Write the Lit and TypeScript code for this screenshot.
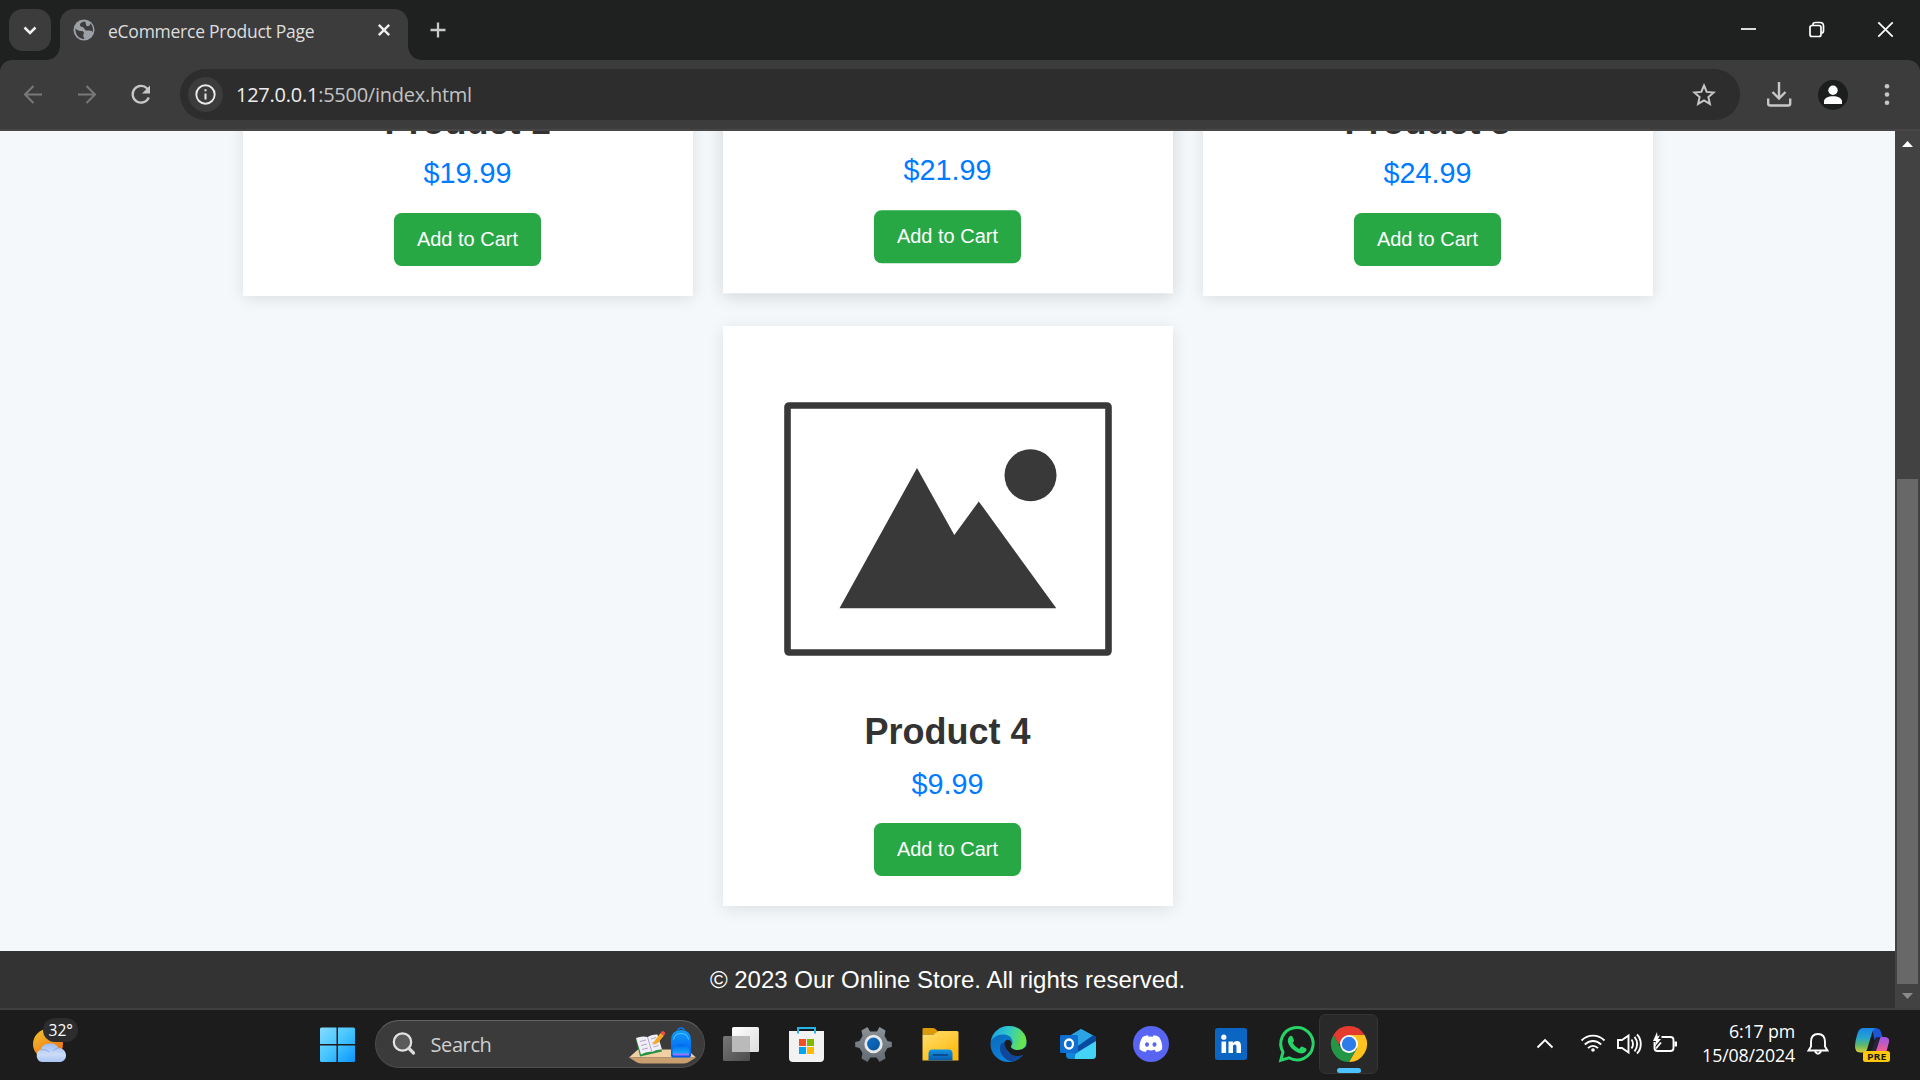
import { LitElement, html, svg, css } from "lit";
import { customElement, property } from "lit/decorators.js";

// Icon cell: its viewBox is the slice of the screen that it covers.
const cell = (x: number, y: number, w: number, h: number, body: unknown) => html`
  <svg class="cell" width=${w} height=${h} viewBox="${x} ${y} ${w} ${h}" fill="none">${body}</svg>`;

@customElement("browser-chrome")
class BrowserChrome extends LitElement {
  static styles = css`
    :host { display: block; font-family: "Open Sans", "Noto Sans", sans-serif; }
    svg { display: block; flex: none; }
    .tabs { display: flex; height: 60px; background: #1f2120; }
    .tab { display: flex; width: 348px; height: 51px; margin-top: 9px; background: #3c3c3c; border-radius: 14px 14px 0 0; }
    .title { width: 262px; font-size: 17.5px; line-height: 45px; letter-spacing: -0.25px; color: #dedede; white-space: nowrap; }
    .spacer { flex: 1; }
    .toolbar { display: flex; flex: 1; height: 69px; border-bottom: 2px solid #484646; }
    .corner { background: #1f2120; }
    .pill { display: flex; width: 1560px; height: 51px; margin-top: 9px; border-radius: 26px; background: #2d2d2d; }
    .url { flex: 1; font-size: 20px; line-height: 52px; letter-spacing: -0.25px; color: #c2c2c2; white-space: nowrap; }
    .host { color: #ececec; }
    .bar { display: flex; border-radius: 12px 12px 0 0; background: #3c3c3c; }
  `;
  render() {
    return html`
      <div class="tabs">
        ${cell(0, 0, 60, 60, svg`
          <rect x="9" y="9" width="42" height="42" rx="14" fill="#3c3c3c"/>
          <path d="M60 45v15H45c9 0 15-6 15-15z" fill="#3c3c3c"/>
          <path d="M24.5 27.5l5.500 5.500 5.500-5.500" stroke="#f0f0f0" stroke-width="2.500"/>`)}
        <div class="tab">
          ${cell(60, 9, 48, 51, svg`
            <circle cx="84" cy="30" r="10.500" fill="#9aa0a6"/>
            <path d="M84.500 21.500c-3 .5-5 2-4.500 4 .6 2 4 1 4.500 3.500.4 2 3.500 1.500 5 1.500 2 0 3.500 1 3 2.500 1-3 .5-7-2-9.500-.5 2-2 3-3.500 2.500-2-.8 0-3-2.500-4.500z" fill="#3c3c3c"/>
            <path d="M75.500 28.500c2 2 4 2.500 6 2.500s3 1.500 2 3.500 1 3 1 4.500c-5 0-9.500-4-9-10.500z" fill="#3c3c3c"/>`)}
          <span class="title">eCommerce Product Page</span>
          ${cell(370, 9, 38, 51, svg`<path d="M378.800 24.800l10.400 10.400M389.200 24.800l-10.400 10.400" stroke="#eee" stroke-width="2.400"/>`)}
        </div>
        ${cell(408, 0, 60, 60, svg`
          <path d="M408 45v15h15c-9 0-15-6-15-15z" fill="#3c3c3c"/>
          <path d="M438 22.500v15M430.500 30h15" stroke="#c9c9c9" stroke-width="2.300"/>`)}
        <span class="spacer"></span>
        ${cell(1720, 0, 200, 60, svg`<g stroke="#fff" stroke-width="1.700">
          <path d="M1741 29h15"/>
          <rect x="1810" y="25.500" width="11" height="11" rx="2"/>
          <path d="M1813 25v-.5q0-2 2.500-2h4.500q3.500 0 3.500 3.500v4.500q0 2.500-2 2.500"/>
          <path d="M1878.300 22.300l14.400 14.400M1892.700 22.300l-14.400 14.400"/></g>`)}
      </div>
      <div class="corner"><div class="bar"><div class="toolbar">
        ${cell(0, 60, 60, 69, svg`<path d="M42 94.500H25.500M33.500 86l-8.500 8.500 8.500 8.500" stroke="#797979" stroke-width="2"/>`)}
        ${cell(60, 60, 54, 69, svg`<path d="M78 94.500h16.500M86.500 86l8.500 8.500-8.500 8.500" stroke="#797979" stroke-width="2"/>`)}
        ${cell(114, 60, 66, 69, svg`
          <path d="M148.800 97.500a8.400 8.400 0 1 1-1.600-9l1.600 2" stroke="#c7c7c7" stroke-width="2.300"/>
          <path d="M150 85.500v8h-8z" fill="#c7c7c7"/>`)}
        <div class="pill">
          ${cell(180, 69, 56, 51, svg`
            <circle cx="205.500" cy="94.500" r="17.500" fill="#3c3c3c"/>
            <circle cx="205.500" cy="94.500" r="9.200" stroke="#eaeaea" stroke-width="1.900"/>
            <path d="M205.500 93.500v6M205.500 89.300v2" stroke="#eaeaea" stroke-width="2"/>`)}
          <span class="url"><span class="host">127.0.0.1</span>:5500/index.html</span>
          ${cell(1680, 69, 60, 51, svg`<path d="M1704 85.500l2.700 6.400 6.900.6-5.200 4.600 1.500 6.800-5.900-3.500-5.900 3.500 1.500-6.800-5.200-4.600 6.900-.6z" stroke="#c7c7c7" stroke-width="2"/>`)}
        </div>
        ${cell(1740, 60, 180, 69, svg`
          <path d="M1779 82v16M1772.500 92l6.500 6.500 6.500-6.500M1768.200 98.500v5q0 2 2 2h18q2 0 2-2v-5" stroke="#c7c7c7" stroke-width="2.400"/>
          <circle cx="1833" cy="95" r="15" fill="#1b1e1d"/>
          <circle cx="1833" cy="90.300" r="4.700" fill="#fff"/>
          <path d="M1824 104v-2.500c0-3.500 4.500-5.300 9-5.300s9 1.800 9 5.300v2.500z" fill="#fff"/>
          <g fill="#c7c7c7"><circle cx="1887" cy="86.200" r="2.300"/><circle cx="1887" cy="94.500" r="2.300"/><circle cx="1887" cy="102.800" r="2.300"/></g>`)}
      </div></div></div>`;
  }
}

@customElement("product-card")
class ProductCard extends LitElement {
  @property() name = "";
  @property() price = "";
  static styles = css`
    :host { display: flex; flex-direction: column; align-items: center; box-sizing: border-box; width: 450px; height: 580px; padding: 30px; background: #fff; box-shadow: 0 3px 15px rgba(0, 0, 0, 0.1); font-family: "Liberation Sans", Arial, sans-serif; }
    :host([lifted]) { transform: translateY(-2.700px); box-shadow: 0 4px 17px rgba(0, 0, 0, 0.14); }
    svg { display: block; flex: none; }
    h2 { margin: 10px 0 0; font-size: 36px; line-height: 41px; font-weight: 700; color: #333; }
    p { margin: 15px 0 0; font-size: 28.800px; line-height: 33px; color: #007bff; }
    button { margin: 23px 0 0; width: 147px; height: 53px; padding: 0; border: 0; border-radius: 7.500px; background: #28a745; color: #fff; font: 20px "Liberation Sans", Arial, sans-serif; }
    :host(:last-child) p { margin: 16px 0 -1px; }
  `;
  render() {
    return html`
      <svg width="390" height="345" viewBox="753 356 390 345">
        <rect x="787.500" y="405.500" width="321" height="247" rx="1.500" fill="#fff" stroke="#393939" stroke-width="6.600"/>
        <circle cx="1030.500" cy="475.300" r="26" fill="#393939"/>
        <path d="M839.500 608.300L917 468l37.300 67 24.500-33.600L1056.300 608.300z" fill="#393939"/>
      </svg>
      <h2>${this.name}</h2>
      <p>${this.price}</p>
      <button>Add to Cart</button>`;
  }
}

@customElement("store-page")
class StorePage extends LitElement {
  static styles = css`
    :host { display: flex; height: 877px; overflow: hidden; font-family: "Liberation Sans", Arial, sans-serif; }
    .page { display: flex; flex-direction: column; justify-content: flex-end; width: 1895px; height: 877px; overflow: hidden; background: #f4f8fb; }
    .grid { display: flex; flex-wrap: wrap; justify-content: center; gap: 30px; flex: none; padding: 0 200px 45px; }
    footer { flex: none; height: 57px; line-height: 57px; background: #333; color: #fff; font-size: 24px; text-align: center; }
    .scroll { display: flex; flex-direction: column; align-items: center; width: 25px; background: #424242; }
    .thumb { width: 21px; height: 505px; background: #686868; }
    .gap { flex: none; height: 323px; }
    svg { display: block; flex: none; }
  `;
  render() {
    return html`
      <div class="page">
        <div class="grid">
          <product-card name="Product 1" price="$19.99"></product-card>
          <product-card lifted name="Product 2" price="$21.99"></product-card>
          <product-card name="Product 3" price="$24.99"></product-card>
          <product-card name="Product 4" price="$9.99"></product-card>
        </div>
        <footer>© 2023 Our Online Store. All rights reserved.</footer>
      </div>
      <div class="scroll">
        ${cell(1895, 131, 25, 25, svg`<path d="M1902 147l5.500-6 5.500 6z" fill="#fff"/>`)}
        <div class="gap"></div>
        <div class="thumb"></div>
        ${cell(1895, 984, 25, 24, svg`<path d="M1902 993l5.500 6 5.500-6z" fill="#8a8a8a"/>`)}
      </div>`;
  }
}

@customElement("task-bar")
class TaskBar extends LitElement {
  static styles = css`
    :host { display: flex; box-sizing: border-box; height: 72px; border-top: 2px solid #404040; background: #1c1c1c; color: #fff; font-family: "Open Sans", "Noto Sans", sans-serif; }
    svg { display: block; flex: none; }
    text { font-family: "Open Sans", "Noto Sans", sans-serif; }
    .search { display: flex; box-sizing: border-box; width: 330px; height: 48px; margin: 10px 5px 0 9px; border: 1.500px solid #4c4c4c; border-top-color: #626262; border-radius: 24px; background: #3b3b3b; overflow: hidden; }
    .label { flex: 1; font-size: 20px; line-height: 47px; letter-spacing: -0.4px; color: #cfcfcf; }
    .spacer { flex: 1; }
    .clock { width: 115px; padding-top: 9px; text-align: right; font-size: 17.800px; line-height: 24px; letter-spacing: -0.15px; white-space: nowrap; }
  `;
  render() {
    return html`
      <svg width="310" height="70" viewBox="0 1010 310 70">
        <defs>
          <linearGradient id="sun" x2=".7" y2="1"><stop stop-color="#efc52f"/><stop offset="1" stop-color="#ef6c13"/></linearGradient>
          <linearGradient id="cloud" x2="0" y2="1"><stop stop-color="#9dbdf0"/><stop offset=".6" stop-color="#cbdcf8"/><stop offset="1" stop-color="#a9c3f2"/></linearGradient>
        </defs>
        <circle cx="48" cy="1044" r="15" fill="url(#sun)"/>
        <path d="M42 1062a6.500 6.500 0 0 1-1-12.500c1-4 4-6 9.500-6 4.500 0 6.500 2 8 4.500 5 .5 7.500 3.500 7.500 7.500s-3 6.500-6.500 6.500z" fill="url(#cloud)"/>
        <path d="M41 1050c4-1 6 0 8 2M53 1051c2-2.500 4-3 6-2.800" stroke="#88aae8" fill="none"/>
        <rect x="43" y="1018" width="35" height="24" rx="12" fill="#2d2d2d"/>
        <text x="48.500" y="1036" font-size="16.500" fill="#fff" textLength="24.500" lengthAdjust="spacingAndGlyphs">32°</text>
      </svg>
      <svg width="56" height="70" viewBox="310 1010 56 70">
        <defs><linearGradient id="win" gradientUnits="userSpaceOnUse" x1="320" y1="1027" x2="355" y2="1062"><stop stop-color="#85dcff"/><stop offset=".5" stop-color="#45c5ff"/><stop offset="1" stop-color="#0a95ff"/></linearGradient></defs>
        <path d="M321.500 1027.500H336.500V1044H320V1029q0-1.500 1.500-1.500zM338 1027.500h15.500q1.500 0 1.500 1.500V1044H338zM320 1045.500h16.500V1062H321.500q-1.500 0-1.500-1.500zM338 1045.500h17v15q0 1.500-1.500 1.500H338z" fill="url(#win)"/>
      </svg>
      <div class="search">
        <svg width="54.500" height="45" viewBox="376 1021.500 54.500 45">
          <circle cx="402.500" cy="1042.500" r="8.700" fill="#5a5a5a" stroke="#e3e3e3" stroke-width="2.200"/>
          <path d="M409 1049l4.500 4.500" stroke="#dadada" stroke-width="3.200" stroke-linecap="round"/>
        </svg>
        <span class="label">Search</span>
        <svg width="80" height="45" viewBox="624 1021.500 80 45">
          <defs>
            <linearGradient id="bag" x2="0" y2="1"><stop stop-color="#109dff"/><stop offset="1" stop-color="#0059e8"/></linearGradient>
            <linearGradient id="pocket" x2="0" y2="1"><stop stop-color="#0065ee"/><stop offset="1" stop-color="#18b0fa"/></linearGradient>
          </defs>
          <path d="M629 1058l9-8h49l9 8z" fill="#f3cfa5"/>
          <path d="M629 1058h67l-8 5q-2 1-5 1h-41q-3 0-5-1z" fill="#c99f70"/>
          <path d="M636 1040l4 17 22-5-1-5z" fill="#279242"/>
          <path d="M636 1038.500q6-2.500 11.500-1 4-3 10-2.500l4.500 15q-6-.5-10 2.500-5-1-11 2.500z" fill="#f1eef8"/>
          <path d="M647.500 1037.500l4.500 15M640 1042l6-1.500M641 1046l6-1.500M642 1050l6-1.500M651 1039.500l5-1.500M652 1043.500l6-1.500M653.500 1047.500l5-1.500" stroke="#aaa6c5" stroke-width="1" fill="none"/>
          <path d="M654.500 1041.500l6-8 3.500 2.500-6 7.500-5 2z" fill="#f8a723"/><path d="M660.500 1033.500l2-2q3 .5 2.500 3l-1.500 2z" fill="#f34f4c"/>
          <path d="M678 1031q0-2.500 3-2.500t3 2.500" fill="none" stroke="#0875e9" stroke-width="1.500"/>
          <path d="M671 1056v-15q0-10.500 10-10.500t10 10.500v15q0 2-2 2h-16q-2 0-2-2z" fill="url(#bag)"/>
          <path d="M673.500 1040q1-6 7.500-6t7.500 6" stroke="#55c5ff" fill="none"/>
          <path d="M672.500 1053q0-8.500 8.500-8.500t8.500 8.500v2h-17z" fill="url(#pocket)"/>
          <path d="M673 1055h16" stroke="#9a72ff" stroke-width="2"/>
        </svg>
      </div>
      <svg width="61" height="70" viewBox="710 1010 61 70">
        <defs><linearGradient id="tv" x2="1" y2="1"><stop stop-color="#fff"/><stop offset="1" stop-color="#dcdcdc"/></linearGradient><linearGradient id="tv2" x2="1" y2="1"><stop stop-color="#777"/><stop offset="1" stop-color="#4c4c4c"/></linearGradient></defs>
        <rect x="723" y="1036" width="27" height="25" rx="1.500" fill="url(#tv2)"/>
        <rect x="732" y="1027" width="27" height="25" rx="1.500" fill="url(#tv)"/>
        <path d="M732 1036h18v16h-18z" fill="#bababa"/>
      </svg>
      <svg width="69" height="70" viewBox="771 1010 69 70">
        <path d="M789 1031h35v27q0 4-4 4h-27q-4 0-4-4z" fill="#f2f2f2"/>
        <path d="M798 1033.500v-5.500h17v5.500" fill="none" stroke="#25b5e7" stroke-width="2"/>
        <path d="M799 1039h7v7h-7z" fill="#f25022"/><path d="M807 1039h7v7h-7z" fill="#7fba00"/><path d="M799 1047h7v7h-7z" fill="#00a4ef"/><path d="M807 1047h7v7h-7z" fill="#ffb900"/>
      </svg>
      <svg width="67" height="70" viewBox="840 1010 67 70">
        <defs><linearGradient id="gear" x2="0" y2="1"><stop stop-color="#8b9298"/><stop offset="1" stop-color="#626b73"/></linearGradient><linearGradient id="gearc" x2="1" y2="1"><stop stop-color="#1073cf"/><stop offset="1" stop-color="#075095"/></linearGradient></defs>
        <path d="M867.500 1027l2.500 4.500h7l2.500-4.500 6 3.500-1 5.500 3 5 4.300 1v5l-4.300 1-3 5 1 5.500-6 3.500-3-4.500h-6l-3 4.500-6-3.500 1-5.500-3-5-4.300-1v-5l4.300-1 3-5-1-5.500z" fill="url(#gear)"/>
        <circle cx="873.500" cy="1044" r="7.800" fill="url(#gearc)" stroke="#e6e8ea" stroke-width="2.800"/>
      </svg>
      <svg width="68" height="70" viewBox="907 1010 68 70">
        <defs><linearGradient id="fold" x2=".7" y2="1"><stop stop-color="#ffdf70"/><stop offset="1" stop-color="#ffb90d"/></linearGradient><linearGradient id="foldb" x2="0" y2="1"><stop stop-color="#1495e4"/><stop offset="1" stop-color="#075bb0"/></linearGradient></defs>
        <path d="M922.500 1029q0-1 1.500-1h9q2 0 3 1.500l2 2v3h-15.500z" fill="#dc9a04"/>
        <path d="M922.500 1034.500h11l5-3.500H957q1.500 0 1.500 1.500V1060.500h-36z" fill="url(#fold)"/>
        <path d="M928.500 1060.500v-7q0-4 4-4h16q4 0 4 4v7z" fill="url(#foldb)"/>
        <path d="M933 1055h15" stroke="#064486" stroke-width="1.700"/>
      </svg>
      <svg width="68" height="70" viewBox="975 1010 68 70">
        <defs>
          <linearGradient id="e1" x2="1" y2=".2"><stop stop-color="#199ee3"/><stop offset=".5" stop-color="#2fc7cb"/><stop offset="1" stop-color="#69e54c"/></linearGradient>
          <linearGradient id="e2" x2=".5" y2="1"><stop stop-color="#0b62b3"/><stop offset="1" stop-color="#0b86dd"/></linearGradient>
        </defs>
        <circle cx="1008.500" cy="1044" r="18" fill="url(#e2)"/>
        <path d="M991 1041c1.500-9 9-15 18-15 10 0 17.500 7 17.500 15.500 0 6-4.500 8.500-9 8.500-3.500 0-6.500-1-6.500-3 0-1.500 2-2 1.500-5.500-1-5.500-5.500-7-9.500-7-6 0-10 3-12 6.500z" fill="url(#e1)"/>
        <path d="M1001 1044c-3 6 1 15 10 17.500 6-1 11-4 12.500-8-4.500 3-12 2.500-15-1-3-3.500-2.500-7-.5-10-3-.5-5.500 0-7 1.500z" fill="#10479a"/>
        <path d="M1004.500 1043.500c-.5-2.500 3-5 5.500-3 2.500 2 1.500 4 1 5.500s2 4 6.500 4c4 0 7-1.500 9.500-4.500v6l-3.500 3c-4 2-10 2.500-14-1.500-3-3-4.500-6-5-9.500z" fill="#1c1c1c"/>
      </svg>
      <svg width="73" height="70" viewBox="1043 1010 73 70">
        <path d="M1066 1038l15-9 15 8v18q0 4-4 4h-22q-4 0-4-4z" fill="#1583d6"/>
        <path d="M1066 1038l15-9 12 6.500-16 11z" fill="#2ba4e6"/>
        <path d="M1075 1048l18-12.500 3 1.500v5l-18 12z" fill="#054a9f"/>
        <path d="M1096 1041v14q0 4-4 4h-17q-1-5 3-7z" fill="#43d3f7"/>
        <rect x="1060" y="1035" width="18" height="18" rx="1.500" fill="#0f6fd0"/>
        <ellipse cx="1069" cy="1044" rx="4" ry="4.500" fill="none" stroke="#fff" stroke-width="2.300"/>
      </svg>
      <svg width="74" height="70" viewBox="1116 1010 74 70">
        <circle cx="1151" cy="1044" r="18" fill="#5865f2"/>
        <path d="M1142.500 1037q3-1.500 5.500-1.800l.8 1.500q2-.3 4 0l.8-1.500q3 .3 5.500 1.800c2.500 4 3.500 8 3 12.500q-3 2-6 2.500l-1.500-2.200q-3.500 1.200-7.500 0l-1.500 2.200q-3-.5-6-2.500c-.5-4.500.5-8.500 2.900-12.500z" fill="#fff"/>
        <ellipse cx="1147" cy="1044.500" rx="2" ry="2.300" fill="#5865f2"/><ellipse cx="1154.500" cy="1044.500" rx="2" ry="2.300" fill="#5865f2"/>
      </svg>
      <svg width="80" height="70" viewBox="1190 1010 80 70">
        <rect x="1215" y="1028" width="32" height="32" rx="2.500" fill="#0a66c2"/>
        <circle cx="1223.800" cy="1037.200" r="2.600" fill="#fff"/>
        <path d="M1221.500 1041.500h4.600v11.500h-4.600zM1228.500 1041.500h4.400v1.600q1.500-2 4-2c3.500 0 4.100 2.500 4.100 5.500v6.400h-4.500v-5.700c0-1.800-.3-2.700-1.700-2.700s-1.800 1-1.800 2.700v5.700h-4.500z" fill="#fff"/>
      </svg>
      <svg width="49" height="70" viewBox="1270 1010 49 70">
        <path d="M1280.800 1060.200l2.200-8.300a16.200 16.200 0 1 1 6 5.900z" fill="none" stroke="#25d366" stroke-width="3"/>
        <path d="M1289.500 1036.500q1.800-1.500 3 .2l1.500 3.600q.2 1-1.400 2.500 2 4 6.500 6.200l2-2.300q.8-.5 1.500 0l3.600 1.800c1 1-.1 3.500-2.300 4.600-2.500 1-6 0-9.600-2.600s-6-6-6.400-8.500c-.4-2 .2-4.200 1.600-5.500z" fill="#25d366"/>
      </svg>
      <svg width="61" height="70" viewBox="1319 1010 61 70">
        <rect x="1319.500" y="1014.500" width="58" height="59" rx="6" fill="#292929" stroke="#353535"/>
        <path d="M1349 1044L1333.400 1035A18 18 0 0 1 1364.600 1035z" fill="#e33b2e"/>
        <path d="M1349 1035h15.600A18 18 0 0 1 1349 1062l7.800-13.500z" fill="#fcc31e"/>
        <path d="M1341.200 1048.500L1333.400 1035A18 18 0 0 0 1349 1062l7.800-13.500z" fill="#249747"/>
        <path d="M1333.400 1035H1349v9h-10.500z" fill="#e33b2e"/>
        <circle cx="1349" cy="1044" r="9" fill="#fff"/><circle cx="1349" cy="1044" r="7.200" fill="#2d7ce9"/>
        <rect x="1337" y="1068" width="24" height="5" rx="2.500" fill="#4cc2ff"/>
      </svg>
      <span class="spacer"></span>
      <svg width="150" height="70" viewBox="1530 1010 150 70" fill="none" stroke="#fff" stroke-width="1.900">
        <path d="M1537.500 1047.500l7.500-7.500 7.500 7.500"/>
        <path d="M1581.500 1040.500c6.500-6.500 16.500-6.500 23 0M1584.800 1044.500c4.800-4.700 11.600-4.700 16.400 0M1588 1048.200c3-3 7-3 10 0"/>
        <circle cx="1593" cy="1050" r="1.800" fill="#fff" stroke="none"/>
        <path d="M1618 1040h4l6.500-4.500v17l-6.500-4.500h-4zM1631.500 1039.500c2 2.500 2 6.500 0 9M1634.500 1036.800c3.500 4 3.500 10.500 0 14.500M1637 1034.500c5 5 5 14 0 19"/>
        <path d="M1661.500 1037h9q3 0 3 3v8q0 3-3 3h-13q-3 0-3-3v-6"/>
        <path d="M1675.700 1041.500v5" stroke-width="2.600"/>
        <path d="M1657 1032l-4 9h3l-1.500 6 6.500-8h-3l2-4-2.500 1.500z" fill="#fff" stroke="none"/>
        <path d="M1656 1048.500l5-6"/>
      </svg>
      <div class="clock">6:17 pm<br>15/08/2024</div>
      <svg width="125" height="70" viewBox="1795 1010 125 70">
        <defs>
          <linearGradient id="cp" x2="0" y2="1"><stop stop-color="#1785e8"/><stop offset=".4" stop-color="#25a5cf"/><stop offset=".7" stop-color="#5cb86c"/><stop offset="1" stop-color="#d7cc35"/></linearGradient>
          <linearGradient id="cq" x2="0" y2="1"><stop stop-color="#9a55ed"/><stop offset="1" stop-color="#f3618b"/></linearGradient>
        </defs>
        <path d="M1808.500 1050.500l2.500-4v-4.500q0-8 7-8t7 8v4.500l2.500 4zM1815 1051.500q3 4.500 6 0" fill="none" stroke="#fff" stroke-width="1.900"/>
        <path d="M1872 1028.300h4.500q3.500.2 4.500 3.700l1.500 5h-3q-4 0-5 3z" fill="#1c55d6"/>
        <path d="M1863.500 1028h13q-3.500.5-4.500 5l-4.500 15q-1.300 4.500-4.500 4.500h-3q-5.500-.5-5-7 .5-6 2.500-12 1.500-5.500 6-5.500z" fill="url(#cp)"/>
        <path d="M1880.500 1037h5q4.500 1 3.500 5l-2.500 9.500H1870q3-.5 4-4l2.500-8q1-2.500 4-2.500z" fill="url(#cq)"/>
        <path d="M1876.500 1037h4l-4.500 14h-5z" fill="#26233a"/>
        <rect x="1863" y="1051" width="27" height="11" rx="2.500" fill="#fdc70c"/>
        <text x="1867" y="1060" font-size="9.500" font-weight="700" fill="#1c1c1c" textLength="19.500" lengthAdjust="spacingAndGlyphs">PRE</text>
      </svg>`;
  }
}

@customElement("app-root")
class AppRoot extends LitElement {
  static styles = css`
    :host { display: flex; flex-direction: column; width: 1920px; height: 1080px; overflow: hidden; }
    browser-chrome, store-page, task-bar { flex: none; }
  `;
  render() {
    return html`<browser-chrome></browser-chrome><store-page></store-page><task-bar></task-bar>`;
  }
}
